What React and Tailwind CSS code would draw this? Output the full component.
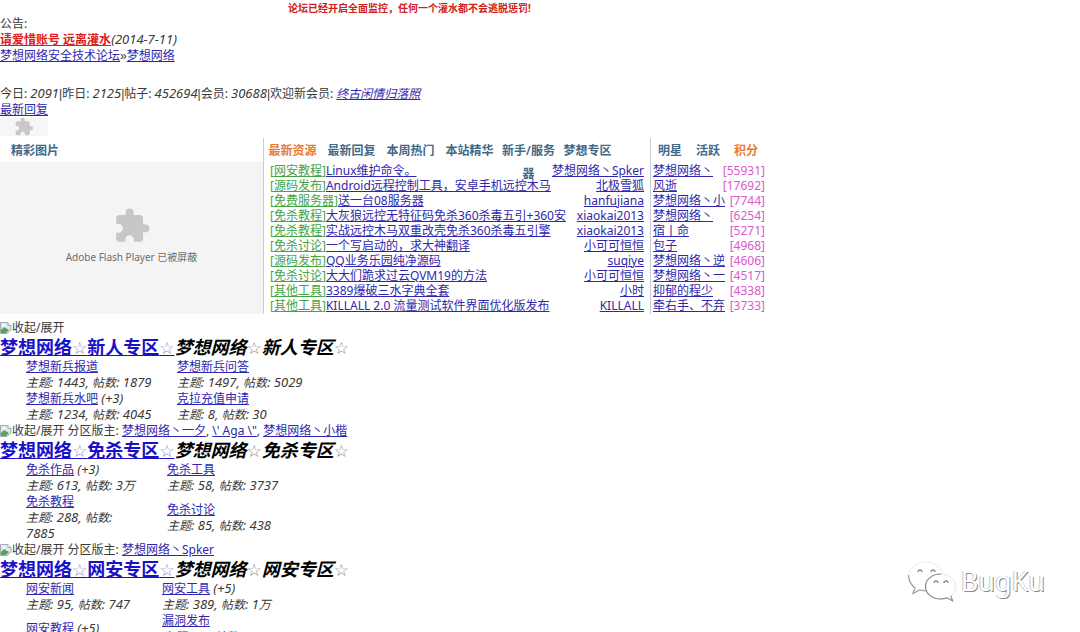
import React from "react";
import { MdExtension } from "react-icons/md";

const threads = [
  ["网安教程", "Linux维护命令。", "梦想网络丶Spker"],
  ["源码发布", "Android远程控制工具，安卓手机远控木马", "北极雪狐"],
  ["免费服务器", "送一台08服务器", "hanfujiana"],
  ["免杀教程", "大灰狼远控无特征码免杀360杀毒五引+360安", "xiaokai2013"],
  ["免杀教程", "实战远控木马双重改壳免杀360杀毒五引擎", "xiaokai2013"],
  ["免杀讨论", "一个写启动的，求大神翻译", "小可可恒恒"],
  ["源码发布", "QQ业务乐园纯净源码", "suqiye"],
  ["免杀讨论", "大大们跪求过云QVM19的方法", "小可可恒恒"],
  ["其他工具", "3389爆破三水字典全套", "小时"],
  ["其他工具", "KILLALL 2.0 流量测试软件界面优化版发布", "KILLALL"],
];

const ranks = [
  ["梦想网络丶", 55931],
  ["风逝", 17692],
  ["梦想网络丶小", 7744],
  ["梦想网络丶", 6254],
  ["宿丨命", 5271],
  ["包子", 4968],
  ["梦想网络丶逆", 4606],
  ["梦想网络丶一", 4517],
  ["抑郁的程少", 4338],
  ["牵右手、不弃", 3733],
];

const sections = [
  {
    name: "新人专区",
    mods: [],
    col: "w-[177px] pr-4",
    col2: "",
    rows: [
      [
        { name: "梦想新兵报道", topics: 1443, posts: "1879" },
        { name: "梦想新兵问答", topics: 1497, posts: "5029" },
      ],
      [
        { name: "梦想新兵水吧", extra: "(+3)", topics: 1234, posts: "4045" },
        { name: "克拉充值申请", topics: 8, posts: "30" },
      ],
    ],
  },
  {
    name: "免杀专区",
    mods: ["梦想网络丶一夕", "\\' Aga \\\"", "梦想网络丶小楷"],
    col: "w-[167px] pr-7",
    col2: "",
    rows: [
      [
        { name: "免杀作品", extra: "(+3)", topics: 613, posts: "3万" },
        { name: "免杀工具", topics: 58, posts: "3737" },
      ],
      [
        { name: "免杀教程", topics: 288, posts: "7885" },
        { name: "免杀讨论", topics: 85, posts: "438" },
      ],
    ],
  },
  {
    name: "网安专区",
    mods: ["梦想网络丶Spker"],
    col: "w-[162px] pr-4",
    col2: "w-[110px]",
    rows: [
      [
        { name: "网安新闻", topics: 95, posts: "747" },
        { name: "网安工具", extra: "(+5)", topics: 389, posts: "1万" },
      ],
      [
        { name: "网安教程", extra: "(+5)", topics: 63, posts: "927" },
        { name: "漏洞发布", topics: 47, posts: "1005" },
      ],
    ],
  },
];

function Link({ children, className = "text-[#2f28ae]" }) {
  return (
    <a href="#" className={`underline ${className}`}>
      {children}
    </a>
  );
}

function Bar() {
  return <span className="font-['Liberation_Sans']">|</span>;
}

function Num({ children }) {
  return <em className="text-[13px] leading-none">{children}</em>;
}

function BrokenImage() {
  return (
    <svg viewBox="0 0 12 14" className="h-3.5 w-3 shrink-0" aria-hidden="true">
      <path d="M.5 1.500H8l3 3V9L7 12.500H.5z" fill="#dfe9f5" stroke="#a5abb0" />
      <path d="M8 1.500v3h3" fill="#fff" stroke="#a5abb0" />
      <path d="M1 12V9l3-3 5 3-3 3z" fill="#5aa35a" />
      <circle cx="4" cy="4.500" r="1.200" fill="#fff" />
    </svg>
  );
}

function Star({ className }) {
  return (
    <span className={`font-['DejaVu_Sans'] text-[17px] font-normal ${className}`}>☆</span>
  );
}

function Title({ name, star }) {
  return (
    <>
      梦想网络
      <Star className={star} />
      {name}
      <Star className={star} />
    </>
  );
}

function Forum({ forum }) {
  const unit = forum.posts.endsWith("万");
  return (
    <>
      <div>
        <Link>{forum.name}</Link>
        {forum.extra && (
          <>
            {" "}
            <Num>{forum.extra}</Num>
          </>
        )}
      </div>
      <div className="italic">
        主题<Num>: {forum.topics}, </Num>
        帖数<Num>: {unit ? forum.posts.slice(0, -1) : forum.posts}</Num>
        {unit && "万"}
      </div>
    </>
  );
}

function Section({ section }) {
  return (
    <section>
      <div className="flex h-4 items-center whitespace-pre">
        <BrokenImage />
        <span>
          收起/展开
          {section.mods.length > 0 && " 分区版主: "}
          {section.mods.map((m, i) => (
            <React.Fragment key={m}>
              {i > 0 && ", "}
              <Link>{m}</Link>
            </React.Fragment>
          ))}
        </span>
      </div>
      <h2 className="flex text-lg leading-[22px] font-bold whitespace-nowrap text-black">
        <Link className="text-[#1a10c8]">
          <Title name={section.name} star="text-[#8f8cc8]" />
        </Link>
        <em>
          <Title name={section.name} star="text-[#8a8a8a]" />
        </em>
      </h2>
      <table className="border-collapse">
        <tbody>
          {section.rows.map((row, i) => (
            <tr key={i}>
              <td className={`pl-[26px] align-middle ${section.col}`}>
                <Forum forum={row[0]} />
              </td>
              <td className={`align-middle ${section.col2}`}>
                <Forum forum={row[1]} />
              </td>
            </tr>
          ))}
        </tbody>
      </table>
    </section>
  );
}

function Watermark() {
  return (
    <div className="absolute right-[35px] bottom-[30px] flex items-center gap-1">
      <svg viewBox="0 0 50 42" className="h-[42px] w-[50px]" fill="#fff" aria-hidden="true">
        <path
          d="M19 2C9 2 1.500 8.500 1.500 16.500c0 5 2.500 8.500 6.500 11.500l-2 5.500 6.500-3.500c7 2 22 1 24-13C35.500 8 28.500 2 19 2z"
          stroke="#ececee"
        />
        <path
          d="M1.500 15c.3 6 2.500 10 6.500 13l-2 5.500 6.500-3.500 6 .8"
          fill="none"
          stroke="#9a9aa0"
          strokeWidth="1.200"
        />
        <path
          d="M33.500 14c-8.500 0-15 5.500-15 12.500S25 39 33.500 39c2.500 0 4.500-.4 6.500-1.200l5.500 3-1.500-5c3-2.500 4.500-5.500 4.500-9.300C48.500 19.500 42 14 33.500 14z"
          stroke="#e6e6ea"
        />
        <path
          d="M34 14c-9 0-15.500 5.500-15.500 12.500S25 39 33.500 39c2.500 0 4.500-.4 6.500-1.200l5.500 3-1.500-5"
          fill="none"
          stroke="#8c8c92"
          strokeWidth="1.200"
        />
        <path
          d="M11 12a2 2 0 0 1 4 0M24 12a2 2 0 0 1 4 0M27 23a2 2 0 0 1 4 0M37 23a2 2 0 0 1 4 0"
          fill="none"
          stroke="#8a8a90"
          strokeWidth="1.300"
        />
      </svg>
      <span className="text-[27px] leading-9 text-white [text-shadow:1px_1px_0_#8c8c92,-1px_0_0_#c6c6cb]">
        BugKu
      </span>
    </div>
  );
}

export default function App() {
  const tabs = ["最新资源", "最新回复", "本周热门", "本站精华", "新手/服务器", "梦想专区"];
  return (
    <div className="relative h-screen overflow-hidden bg-white pt-px font-['Noto_Sans','Noto_Sans_CJK_SC',sans-serif] text-xs leading-4 text-[#3a3a3a]">
      <p className="-mt-px pl-72 text-[10px] font-bold text-[#d02020]">
        论坛已经开启全面监控，任何一个灌水都不会逃脱惩罚!
      </p>
      <p>公告:</p>
      <p>
        <Link className="font-bold text-[#dc2020]">请爱惜账号 远离灌水</Link>
        <Num>(2014-7-11)</Num>
      </p>
      <nav>
        <Link>梦想网络安全技术论坛</Link>
        <span className="font-['Liberation_Sans']">»</span>
        <Link>梦想网络</Link>
      </nav>
      <p className="mt-[22px]">
        今日: <Num>2091</Num>
        <Bar />
        昨日: <Num>2125</Num>
        <Bar />
        帖子: <Num>452694</Num>
        <Bar />
        会员: <Num>30688</Num>
        <Bar />
        欢迎新会员:{" "}
        <em>
          <Link>终古闲情归落照</Link>
        </em>
      </p>
      <p>
        <Link>最新回复</Link>
      </p>
      <div className="flex h-[18px] w-12 items-center justify-center bg-[#f8f5f8]">
        <MdExtension className="size-5 text-[#c9c7c9]" />
      </div>

      <div className="mt-0.5 mb-1.5 flex h-44">
        <section className="flex w-[264px] flex-col border-r border-[#c5cfdc]">
          <h3 className="h-6 pt-px pl-[11px] leading-[23px] font-semibold text-[#406a88]">
            精彩图片
          </h3>
          <div className="flex flex-1 flex-col items-center justify-center bg-[#f5f4f5] pb-1 text-[#6d6d6d]">
            <MdExtension className="size-[38px] text-[#c8c6c8]" />
            <span className="mt-1 text-[10px]">Adobe Flash Player 已被屏蔽</span>
          </div>
        </section>
        <section className="w-[387px] border-r border-[#c5cfdc]">
          <div className="flex h-[25px] pt-px">
            {tabs.map((t, i) => (
              <h3
                key={t}
                className={`w-[59px] pr-0.5 text-center leading-[23px] font-semibold break-all ${i === 0 ? "text-[#e87a30]" : "text-[#406a88]"}`}
              >
                {t}
              </h3>
            ))}
          </div>
          <ul className="px-1.5 leading-[15px] whitespace-nowrap">
            {threads.map(([cat, title, user]) => (
              <li key={title} className="flex h-[15px] justify-between">
                <span>
                  <span className="text-[#45a345]">
                    [<Link className="text-[#45a345]">{cat}</Link>]
                  </span>
                  <Link>{title}</Link>
                </span>
                <Link>{user}</Link>
              </li>
            ))}
          </ul>
        </section>
        <section className="w-[114px]">
          <div className="flex h-[25px] pt-px text-center leading-[23px] font-semibold text-[#406a88]">
            <h3 className="w-[38px]">明星</h3>
            <h3 className="w-[38px]">活跃</h3>
            <h3 className="w-[38px] text-[#e87a30]">积分</h3>
          </div>
          <ul className="pl-0.5 leading-[15px] whitespace-nowrap">
            {ranks.map(([user, score]) => (
              <li key={score} className="flex h-[15px] justify-between">
                <Link>{user}</Link>
                <span className="text-[#dc58cc]">[{score}]</span>
              </li>
            ))}
          </ul>
        </section>
      </div>

      {sections.map((s) => (
        <Section key={s.name} section={s} />
      ))}
      <Watermark />
    </div>
  );
}
